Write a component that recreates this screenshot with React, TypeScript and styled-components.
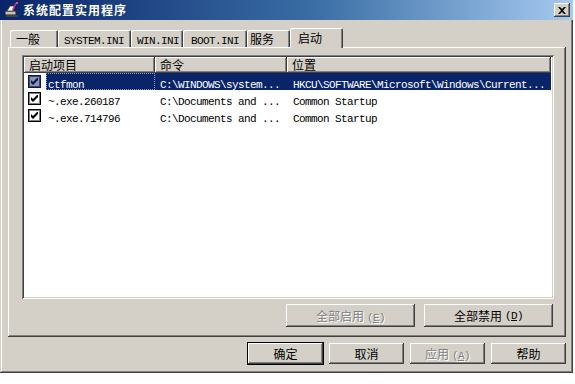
import React from "react";
import styled, { createGlobalStyle, css } from "styled-components";

const GlobalStyle = createGlobalStyle`
  html, body { margin: 0; padding: 0; background: #ffffff; }
  body { font-family: "Noto Sans CJK SC", "Liberation Sans", sans-serif; }
  * { box-sizing: border-box; }
`;

const GRAY = "#d4d0c8";
const SHADOW = "#808080";
const DARK = "#404040";
const NAVY = "#0a246a";

const raised = css`
  box-shadow: inset -1px -1px ${DARK}, inset 1px 1px #ffffff,
    inset -2px -2px ${SHADOW}, inset 2px 2px ${GRAY};
`;

const Window = styled.div`
  width: 573px;
  height: 373px;
  background: ${GRAY};
  display: flex;
  flex-direction: column;
  padding: 0 3px 3px 3px;
  box-shadow: inset -1px -1px ${DARK}, inset 1px 0 ${GRAY},
    inset -2px -2px ${SHADOW}, inset 2px 0 #ffffff;
`;

const TitleBar = styled.div`
  height: 20px;
  margin: 0 -3px 0 -3px;
  padding: 0 3px 0 4px;
  display: flex;
  align-items: center;
  background: linear-gradient(to right, ${NAVY} 0%, #3a6ea5 55%, #a6caf0 100%);
`;

const Title = styled.span`
  flex: 1;
  margin-left: 3px;
  color: #ffffff;
  font-weight: bold;
  font-size: 12px;
  letter-spacing: 1px;
  line-height: 20px;
`;

const CloseButton = styled.div`
  width: 16px;
  height: 14px;
  background: ${GRAY};
  ${raised};
  display: flex;
  align-items: center;
  justify-content: center;
`;

const Body = styled.div`
  flex: 1;
  display: flex;
  flex-direction: column;
  padding: 8px 4px 0 5px;
`;

const TabStrip = styled.div`
  height: 19px;
  display: flex;
  align-items: flex-end;
  padding-left: 2px;
  position: relative;
  z-index: 1;
`;

const Tab = styled.div<{ $w: number; $pad: number; $active?: boolean }>`
  width: ${(p) => p.$w}px;
  height: ${(p) => (p.$active ? 20 : 17)}px;
  margin-bottom: ${(p) => (p.$active ? -1 : 0)}px;
  padding-left: ${(p) => p.$pad}px;
  padding-top: ${(p) => (p.$active ? 2 : 1)}px;
  background: ${GRAY};
  border-radius: 2px 2px 0 0;
  box-shadow: inset 1px 1px #ffffff, inset -1px 0 ${DARK},
    inset -2px 0 ${SHADOW};
  font-size: 12px;
  line-height: 15px;
  color: #000;
  white-space: nowrap;
`;

const Mono = styled.span`
  font-family: "Liberation Mono", monospace;
  font-size: 11px;
  letter-spacing: -0.6px;
`;

const Panel = styled.div`
  height: 290px;
  display: flex;
  flex-direction: column;
  padding: 8px 12px 0 14px;
  box-shadow: inset -1px -1px ${DARK}, inset 1px 1px #ffffff,
    inset -2px -2px ${SHADOW};
`;

const ListView = styled.div`
  height: 244px;
  background: #ffffff;
  padding: 2px;
  box-shadow: inset 1px 1px ${SHADOW}, inset -1px -1px #ffffff,
    inset 2px 2px ${DARK}, inset -2px -2px ${GRAY};
  display: flex;
  flex-direction: column;
`;

const cols = "131px 132px 264px";

const HeaderRow = styled.div`
  display: grid;
  grid-template-columns: ${cols};
  height: 16px;
`;

const HeaderCell = styled.div`
  background: ${GRAY};
  ${raised};
  font-size: 12px;
  line-height: 15px;
  padding-left: 5px;
  color: #000;
`;

const Row = styled.div`
  display: grid;
  grid-template-columns: ${cols};
  height: 17px;
  align-items: center;
`;

const FirstCell = styled.div`
  display: flex;
  align-items: center;
  height: 17px;
  padding-left: 4px;
`;

const Label = styled.div<{ $sel?: boolean }>`
  margin-left: 5px;
  flex: 1;
  height: 17px;
  padding-left: 2px;
  line-height: 16px;
  white-space: nowrap;
  color: ${(p) => (p.$sel ? "#ffffff" : "#000")};
  background: ${(p) => (p.$sel ? NAVY : "transparent")};
  outline: ${(p) => (p.$sel ? "1px dotted #8c9ccc" : "none")};
  outline-offset: -1px;
`;

const Cell = styled.div<{ $sel?: boolean; $pad: number }>`
  height: 17px;
  line-height: 16px;
  padding-left: ${(p) => p.$pad}px;
  white-space: nowrap;
  overflow: hidden;
  color: ${(p) => (p.$sel ? "#ffffff" : "#000")};
  background: ${(p) => (p.$sel ? NAVY : "transparent")};
`;

const CheckBox = styled.div<{ $sel?: boolean }>`
  width: 13px;
  height: 13px;
  flex: none;
  background: ${(p) => (p.$sel ? "#8a95b5" : "#ffffff")};
  border: 1px solid ${(p) => (p.$sel ? "#0a1a40" : "#000")};
  box-shadow: inset 0 0 0 1px ${(p) => (p.$sel ? "#3a4670" : SHADOW)};
  display: flex;
  align-items: center;
  justify-content: center;
`;

const ListButtons = styled.div`
  display: flex;
  justify-content: flex-end;
  gap: 9px;
  margin-top: 5px;
  padding-right: 1px;
`;

const Button = styled.div<{ $w: number; $h: number; $default?: boolean }>`
  width: ${(p) => p.$w}px;
  height: ${(p) => p.$h}px;
  background: ${GRAY};
  ${raised};
  display: flex;
  align-items: center;
  justify-content: center;
  font-size: 12px;
  color: #000;
  ${(p) =>
    p.$default &&
    css`
      outline: 1px solid #000;
    `}
`;

const Disabled = styled.span`
  color: ${SHADOW};
  text-shadow: 1px 1px #ffffff;
`;

const Key = styled.span`
  font-family: "Liberation Mono", monospace;
  font-size: 11px;
  letter-spacing: -0.6px;
  margin-left: 3px;
`;

const Under = styled.span`
  text-decoration: underline;
`;

const DialogButtons = styled.div`
  display: flex;
  justify-content: flex-end;
  gap: 6px;
  margin-top: 6px;
`;

const Check = ({ dark }: { dark?: boolean }) => (
  <svg width="7" height="7" viewBox="0 0 7 7" style={{ display: "block" }}>
    <path
      d="M0 2 L2 4 L7 -1 L7 2 L2 7 L0 5 Z"
      fill={dark ? "#0a1a40" : "#000"}
    />
  </svg>
);

const AppIcon = () => (
  <svg width="16" height="16" viewBox="0 0 16 16">
    <rect x="1" y="9" width="11" height="4" fill="#c0c0c0" stroke="#202020" strokeWidth="1" />
    <rect x="2" y="13" width="12" height="2" fill="#404040" />
    <path d="M3 9 L6 4 L11 4 L9 9 Z" fill="#ffffff" stroke="#404040" strokeWidth="0.8" />
    <path d="M11 1 L13 1 L9 9 L8 8 Z" fill="#b0307a" />
    <rect x="12" y="0" width="2" height="2" fill="#e05090" />
  </svg>
);

const tabs = [
  { label: "一般", w: 48, pad: 6, mono: false },
  { label: "SYSTEM.INI", w: 73, pad: 6, mono: true },
  { label: "WIN.INI", w: 52, pad: 6, mono: true },
  { label: "BOOT.INI", w: 64, pad: 8, mono: true },
  { label: "服务", w: 43, pad: 3, mono: false },
  { label: "启动", w: 53, pad: 8, mono: false, active: true },
];

const rows = [
  {
    name: "ctfmon",
    cmd: "C:\\WINDOWS\\system...",
    loc: "HKCU\\SOFTWARE\\Microsoft\\Windows\\Current...",
    sel: true,
  },
  { name: "~.exe.260187", cmd: "C:\\Documents and ...", loc: "Common Startup" },
  { name: "~.exe.714796", cmd: "C:\\Documents and ...", loc: "Common Startup" },
];

export default function App() {
  return (
    <>
      <GlobalStyle />
      <Window>
        <TitleBar>
          <AppIcon />
          <Title>系统配置实用程序</Title>
          <CloseButton>
            <svg width="8" height="7" viewBox="0 0 8 7">
              <path d="M0 0 L2 0 L4 2 L6 0 L8 0 L5 3.5 L8 7 L6 7 L4 5 L2 7 L0 7 L3 3.5 Z" fill="#000" />
            </svg>
          </CloseButton>
        </TitleBar>
        <Body>
          <TabStrip>
            {tabs.map((t) => (
              <Tab key={t.label} $w={t.w} $pad={t.pad} $active={t.active}>
                {t.mono ? <Mono>{t.label}</Mono> : t.label}
              </Tab>
            ))}
          </TabStrip>
          <Panel>
            <ListView>
              <HeaderRow>
                <HeaderCell>启动项目</HeaderCell>
                <HeaderCell>命令</HeaderCell>
                <HeaderCell>位置</HeaderCell>
              </HeaderRow>
              {rows.map((r) => (
                <Row key={r.name}>
                  <FirstCell>
                    <CheckBox $sel={r.sel}>
                      <Check dark={r.sel} />
                    </CheckBox>
                    <Label $sel={r.sel}>
                      <Mono>{r.name}</Mono>
                    </Label>
                  </FirstCell>
                  <Cell $sel={r.sel} $pad={5}>
                    <Mono>{r.cmd}</Mono>
                  </Cell>
                  <Cell $sel={r.sel} $pad={6}>
                    <Mono>{r.loc}</Mono>
                  </Cell>
                </Row>
              ))}
            </ListView>
            <ListButtons>
              <Button $w={129} $h={23}>
                <Disabled>
                  全部启用
                  <Key>
                    (<Under>E</Under>)
                  </Key>
                </Disabled>
              </Button>
              <Button $w={129} $h={23}>
                全部禁用
                <Key>
                  (<Under>D</Under>)
                </Key>
              </Button>
            </ListButtons>
          </Panel>
          <DialogButtons>
            <Button $w={75} $h={21} $default>
              确定
            </Button>
            <Button $w={75} $h={21}>
              取消
            </Button>
            <Button $w={75} $h={21}>
              <Disabled>
                应用
                <Key>
                  (<Under>A</Under>)
                </Key>
              </Disabled>
            </Button>
            <Button $w={75} $h={21}>
              帮助
            </Button>
          </DialogButtons>
        </Body>
      </Window>
    </>
  );
}
